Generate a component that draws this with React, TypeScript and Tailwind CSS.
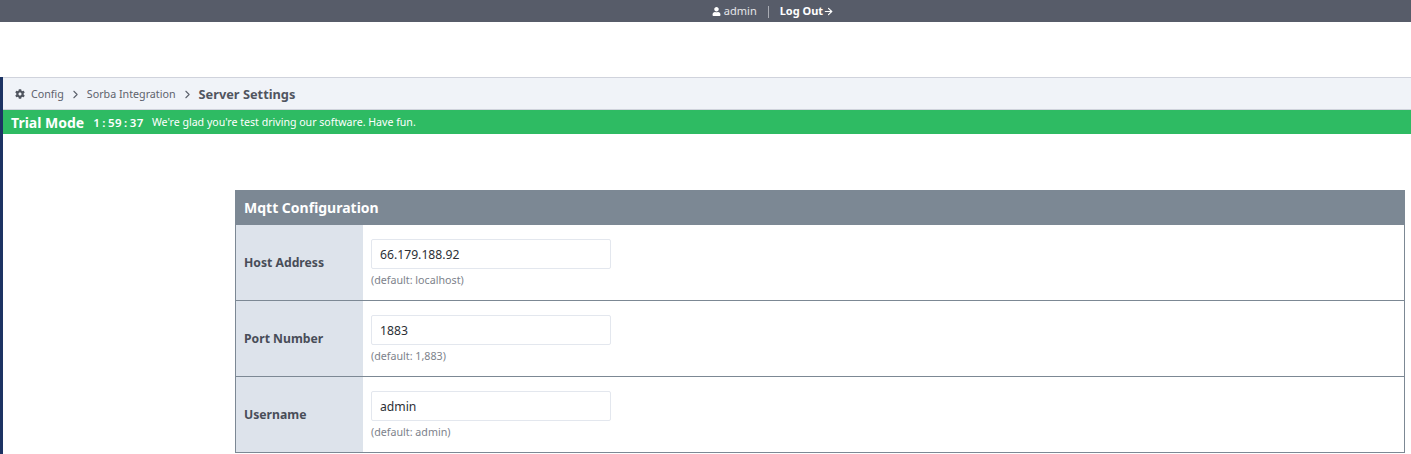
import { ChevronRight, ArrowRight } from "lucide-react";
import { FaCog, FaUser } from "react-icons/fa";

const FIELDS = [
  { label: "Host Address", value: "66.179.188.92", hint: "(default: localhost)" },
  { label: "Port Number", value: "1883", hint: "(default: 1,883)" },
  { label: "Username", value: "admin", hint: "(default: admin)" },
];

function Row({ label, value, hint }: { label: string; value: string; hint: string }) {
  return (
    <div className="flex h-[76px] border-b border-[#7c8894]">
      <div className="flex w-[127px] shrink-0 items-center bg-[#dde3eb] pl-[8px] pt-[1px] text-[12.2px] font-bold text-[#484d58]">
        {label}
      </div>
      <div className="flex-1 pl-[8px] pt-[14px]">
        <input
          readOnly
          value={value}
          className="block h-[30px] w-[240px] rounded-[2px] border border-[#e3e7ee] px-[8px] text-[12.2px] text-[#2c2f36] outline-none"
        />
        <div className="mt-[3px] text-[10.7px] leading-[16px] text-[#7d828b]">{hint}</div>
      </div>
    </div>
  );
}

export default function App() {
  return (
    <div className="h-[454px] overflow-hidden bg-white font-['Noto_Sans',sans-serif]">
      <div className="flex h-[22px] items-center justify-center bg-[#575c69] pl-[135px] pt-[1px] text-[11px] text-white">
        <FaUser className="mr-[3px] h-[9px] w-[9px]" />
        <span className="text-[#e6e7ea]">admin</span>
        <span className="mx-[11px] h-[12px] w-px bg-[#a9acb4]" />
        <span className="font-bold">Log Out</span>
        <ArrowRight className="h-[11px] w-[11px]" strokeWidth={2.5} />
      </div>
      <div className="h-[55px]" />
      <div className="h-[377px] border-l-[3px] border-[#1c3363]">
        <div className="flex h-[33px] items-center border-y border-[#d0d3dc] bg-[#f0f3f8] pl-[12px] pt-[1px] text-[10.7px] text-[#5d626c]">
          <FaCog className="mr-[6px] h-[10px] w-[10px] text-[#50555f]" />
          <span>Config</span>
          <ChevronRight className="mx-[5px] h-[13px] w-[13px]" />
          <span>Sorba Integration</span>
          <ChevronRight className="mx-[5px] h-[13px] w-[13px]" />
          <span className="pt-[1px] text-[12.8px] font-bold text-[#50555f]">Server Settings</span>
        </div>
        <div className="flex h-[24px] items-center bg-[#2ebb63] pl-[8px] pt-[1px] text-white">
          <span className="text-[14px] font-bold">Trial Mode</span>
          <span className="ml-[9px] flex gap-[2px] text-[11.5px] font-semibold tracking-[0.5px]">
            <span>1</span>:<span>59</span>:<span>37</span>
          </span>
          <span className="ml-[8px] text-[10.6px]">We're glad you're test driving our software. Have fun.</span>
        </div>
        <div className="ml-[232px] mr-[6px] mt-[56px]">
          <div className="flex h-[35px] items-center bg-[#7c8894] pl-[9px] text-[14px] font-bold text-white">
            Mqtt Configuration
          </div>
          <div className="border-x border-[#7c8894]">
            {FIELDS.map((f) => (
              <Row key={f.label} {...f} />
            ))}
          </div>
        </div>
      </div>
    </div>
  );
}
